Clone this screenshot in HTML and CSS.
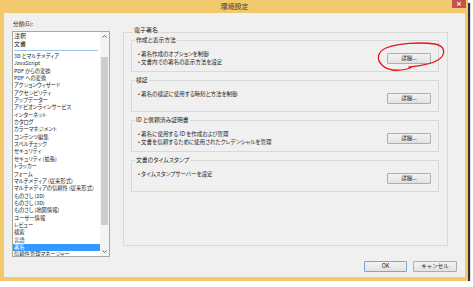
FILE: index.html
```html
<!DOCTYPE html>
<html lang="ja">

<head>
    <meta charset="UTF-8">
    <title>環境設定</title>
    <link rel="stylesheet" href="styles.css">
</head>

<body>
    <div class="window">

        <!-- title bar -->
        <div class="titlebar">
            <span></span>
            <span class="title">環境設定</span>
            <span class="close">×</span>
        </div>

        <div class="client">
            <div class="main">

                <!-- category list -->
                <div class="categories">
                    <div class="label">分類(G):</div>
                    <div class="listbox">
                        <ul class="items">
                            <li class="pinned">注釈</li>
                            <li class="pinned">文書</li>
                            <li class="sep"></li>
                            <li>3D とマルチメディア</li>
                            <li>JavaScript</li>
                            <li>PDF からの変換</li>
                            <li>PDF への変換</li>
                            <li>アクションウィザード</li>
                            <li>アクセシビリティ</li>
                            <li>アップデーター</li>
                            <li>アドビオンラインサービス</li>
                            <li>インターネット</li>
                            <li>カタログ</li>
                            <li>カラーマネジメント</li>
                            <li>コンテンツ編集</li>
                            <li>スペルチェック</li>
                            <li>セキュリティ</li>
                            <li>セキュリティ (拡張)</li>
                            <li>トラッカー</li>
                            <li>フォーム</li>
                            <li>マルチメディア (従来形式)</li>
                            <li>マルチメディアの信頼性 (従来形式)</li>
                            <li>ものさし (2D)</li>
                            <li>ものさし (3D)</li>
                            <li>ものさし (地図情報)</li>
                            <li>ユーザー情報</li>
                            <li>レビュー</li>
                            <li>検索</li>
                            <li>言語</li>
                            <li class="selected">署名</li>
                            <li>信頼性管理マネージャー</li>
                        </ul>
                        <div class="scrollbar">
                            <div class="arrow">
                                <svg width="5" height="3" viewBox="0 0 5 3"><polyline points="0.5,2.5 2.5,0.5 4.5,2.5" fill="none" stroke="#606060" stroke-width="1"/></svg>
                            </div>
                            <div class="thumb"></div>
                            <div class="arrow bottom">
                                <svg width="5" height="3" viewBox="0 0 5 3"><polyline points="0.5,0.5 2.5,2.5 4.5,0.5" fill="none" stroke="#606060" stroke-width="1"/></svg>
                            </div>
                        </div>
                    </div>
                </div>

                <!-- signature settings -->
                <div class="group outer">
                    <div class="group-title">電子署名</div>
                    <div class="subs">
                        <div class="group sub">
                            <div class="group-title">作成と表示方法</div>
                            <div class="row">
                                <div class="bullets">
                                    <div>• 署名作成のオプションを制御</div>
                                    <div>• 文書内での署名の表示方法を設定</div>
                                </div>
                                <button>詳細...</button>
                            </div>
                        </div>
                        <div class="group sub">
                            <div class="group-title">検証</div>
                            <div class="row">
                                <div class="bullets">
                                    <div>• 署名の検証に使用する時刻と方法を制御</div>
                                </div>
                                <button>詳細...</button>
                            </div>
                        </div>
                        <div class="group sub">
                            <div class="group-title">ID と信頼済み証明書</div>
                            <div class="row">
                                <div class="bullets">
                                    <div>• 署名に使用する ID を作成および管理</div>
                                    <div>• 文書を信頼するために使用されたクレデンシャルを管理</div>
                                </div>
                                <button>詳細...</button>
                            </div>
                        </div>
                        <div class="group sub">
                            <div class="group-title">文書のタイムスタンプ</div>
                            <div class="row">
                                <div class="bullets">
                                    <div>• タイムスタンプサーバーを設定</div>
                                </div>
                                <button>詳細...</button>
                            </div>
                        </div>
                    </div>
                </div>
            </div>

            <!-- dialog buttons -->
            <div class="footer">
                <button class="ok">OK</button>
                <button>キャンセル</button>
            </div>
        </div>
    </div>

    <!-- hand drawn red circle -->
    <svg class="annotation" width="473" height="287" viewBox="0 0 473 287">
        <path d="M 412 67 C 404 71, 390 72, 383 66 C 376 60, 377 52, 386 48 C 398 43, 420 42, 435 44 C 446 46, 446 55, 438 60 C 430 65, 418 66, 409 67" fill="none" stroke="#e8141a" stroke-width="1.3" stroke-linecap="round"/>
    </svg>
</body>

</html>
```

FILE: styles.css
```css
body {
    margin: 0;
    background: #fff;
    font-family: "Noto Sans CJK JP", sans-serif;
    font-feature-settings: "palt";
    color: #1e1e1e;
}

.window {
    width: 468px;
    height: 281px;
    box-sizing: border-box;
    padding: 0 3px 4px 4px;
    background: #f2c96c;
    box-shadow: 2px 3px 1px rgba(0, 0, 0, 0.8);
    display: flex;
    flex-direction: column;
}

.titlebar {
    height: 13px;
    display: grid;
    grid-template-columns: 1fr auto 1fr;
}

.title {
    font-size: 7px;
    line-height: 13px;
    color: #404040;
}

.close {
    justify-self: end;
    align-self: start;
    margin-right: -1px;
    width: 14px;
    height: 8px;
    background: #c75050;
    color: #fff;
    font-family: "DejaVu Sans", sans-serif;
    font-size: 7px;
    font-weight: bold;
    line-height: 8px;
    text-align: center;
}

.client {
    height: 264px;
    box-sizing: border-box;
    padding: 7px 8px 5px 8px;
    background: #f0f0f0;
    display: flex;
    flex-direction: column;
}

.main {
    display: flex;
    gap: 13px;
}

/* category list */
.categories {
    width: 98px;
    display: flex;
    flex-direction: column;
    gap: 3px;
}

.label {
    height: 8px;
    padding-left: 1px;
    font-size: 5.5px;
    line-height: 8px;
}

.listbox {
    height: 226px;
    box-sizing: border-box;
    border: 1px solid #a8a8a8;
    background: #fff;
    display: flex;
}

.items {
    flex: 1;
    margin: 0;
    padding: 0;
    list-style: none;
    overflow: hidden;
}

.items li {
    padding-left: 1px;
    font-size: 5.3px;
    line-height: 7.35px;
    white-space: nowrap;
}

.items .pinned {
    font-size: 6px;
    line-height: 8px;
}

.items .sep {
    height: 5px;
    display: flex;
    align-items: center;
}

.items .sep::before {
    content: "";
    flex: 1;
    height: 1px;
    margin-right: 2px;
    background: #9ec6ea;
}

.items .selected {
    background: #3399ff;
    color: #fff;
}

.scrollbar {
    width: 9px;
    background: #f4f4f4;
    display: flex;
    flex-direction: column;
}

.arrow {
    height: 9px;
    display: flex;
    align-items: center;
    justify-content: center;
}

.arrow.bottom {
    margin-top: auto;
}

.thumb {
    height: 168px;
    margin: 16px 1px 0 1px;
    background: #cdcdcd;
}

/* group boxes */
.group {
    box-sizing: border-box;
    border: 1px solid #d9d9d9;
}

.group-title {
    width: fit-content;
    padding: 0 1px;
    background: #f0f0f0;
    font-size: 6px;
    line-height: 8px;
}

.outer {
    width: 325px;
    height: 214px;
    margin-top: 12px;
    padding: 0 8px 0 7px;
}

.outer > .group-title {
    margin: -7px 0 0 2px;
}

.subs {
    padding-top: 6px;
    display: flex;
    flex-direction: column;
    gap: 8px;
}

.sub {
    height: 32px;
}

.sub > .group-title {
    margin: -5px 0 0 3px;
    font-size: 5.8px;
}

.row {
    padding: 6px 7px 0 6px;
    display: flex;
    align-items: center;
    justify-content: space-between;
}

.bullets {
    min-height: 16px;
    font-size: 5.5px;
    line-height: 8px;
    white-space: nowrap;
}

button {
    width: 44px;
    height: 11px;
    padding: 0;
    border: 1px solid #adadad;
    border-radius: 1px;
    background: linear-gradient(#f3f3f3, #e2e2e2);
    color: #222;
    font-family: inherit;
    font-size: 5.5px;
    line-height: 9px;
}

.footer {
    margin-top: auto;
    display: flex;
    justify-content: flex-end;
    gap: 6px;
}

.footer .ok {
    width: 43px;
    border-color: #6fa7de;
}

.annotation {
    position: absolute;
    top: 0;
    left: 0;
    pointer-events: none;
}
```
